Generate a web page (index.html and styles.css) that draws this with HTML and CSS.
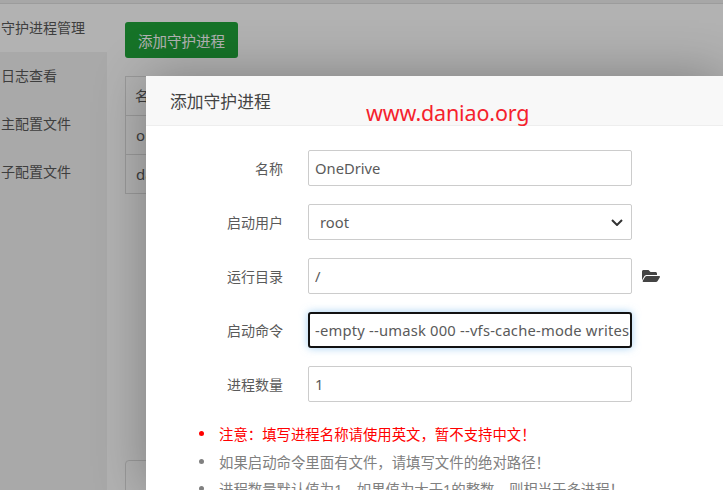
FILE: index.html
```html
<!DOCTYPE html>
<html lang="zh">
<head>
<meta charset="utf-8">
<title>添加守护进程</title>
<link rel="stylesheet" href="styles.css">
</head>
<body>
<div class="page">
  <div class="topbar"></div>
  <div class="main">
    <nav class="side">
      <div class="nav-item active">守护进程管理</div>
      <div class="nav-item">日志查看</div>
      <div class="nav-item">主配置文件</div>
      <div class="nav-item">子配置文件</div>
    </nav>
    <section class="content">
      <button class="add-btn" type="button">添加守护进程</button>
      <div class="table">
        <div class="tr">名称</div>
        <div class="tr">onedrive</div>
        <div class="tr">daniao</div>
      </div>
      <div class="tail-box"></div>
    </section>
  </div>
</div>
<div class="shade"></div>
<div class="modal">
  <header class="modal-head">添加守护进程</header>
  <form class="modal-body">
    <div class="row"><label class="lbl">名称</label><input class="field" value="OneDrive"></div>
    <div class="row"><label class="lbl">启动用户</label><select class="field pick"><option>root</option></select>
    </div>
    <div class="row"><label class="lbl">运行目录</label><input class="field" value="/">
      <svg class="folder" viewBox="0 0 576 512" aria-hidden="true"><path d="M572.694 292.093L500.27 416.248A63.997 63.997 0 0 1 444.989 448H45.025c-18.523 0-30.064-20.093-20.731-36.093l72.424-124.155A64 64 0 0 1 152 256h399.964c18.523 0 30.064 20.093 20.73 36.093zM152 224h328v-48c0-26.51-21.49-48-48-48H272l-64-64H48C21.49 64 0 85.49 0 112v278.046l69.077-118.418C86.214 242.25 117.989 224 152 224z"/></svg>
    </div>
    <div class="row"><label class="lbl">启动命令</label><input class="field focus" value="-empty --umask 000 --vfs-cache-mode writes"></div>
    <div class="row"><label class="lbl">进程数量</label><input class="field" value="1"></div>
    <ul class="notes">
      <li class="warn">注意：填写进程名称请使用英文，暂不支持中文！</li>
      <li>如果启动命令里面有文件，请填写文件的绝对路径！</li>
      <li>进程数量默认值为1，如果值为大于1的整数，则相当于多进程！</li>
    </ul>
  </form>
</div>
<div class="stamp">www.daniao.org</div>
</body>
</html>
```

FILE: styles.css
```css
* { box-sizing: border-box; }
html, body { margin: 0; height: 100%; overflow: hidden; }
body {
  background: #fff;
  color: #5a5a5a;
  font: 14px "Noto Sans", "Noto Sans CJK SC", sans-serif;
}
.page { height: 490px; display: flex; flex-direction: column; overflow: hidden; }
.topbar { height: 4px; background: #f0f0f0; border-bottom: 1px solid #e0e0e0; }
.main { flex: 1; display: flex; min-height: 0; }
.side { width: 107px; flex: none; background: #f2f2f2; overflow: hidden; }
.nav-item {
  height: 48px;
  padding: 0 0 2px 1px;
  display: flex;
  align-items: center;
  white-space: nowrap;
}
.nav-item.active { background: #fff; }
.content { flex: 1; padding: 18px 18px 0; min-width: 0; }
.add-btn {
  display: block;
  width: 113px;
  height: 36px;
  padding: 0;
  background: #20a53a;
  border: 0;
  border-radius: 3px;
  color: #fff;
  font: inherit;
  font-size: 14.5px;
}
.table { margin-top: 18px; border: 1px solid #ddd; font-size: 15px; }
.tr { height: 39px; padding: 0 10px; line-height: 38px; border-top: 1px solid #ddd; }
.tr:first-child { height: 38px; border-top: 0; font-size: 14px; padding-left: 9px; }
.tail-box { margin-top: 266px; height: 60px; border: 1px solid #ddd; border-radius: 4px; }
.shade { position: absolute; inset: 0; background: rgba(0, 0, 0, .3); }
.modal {
  position: absolute;
  left: 146px;
  top: 76px;
  right: 0;
  bottom: 0;
  overflow: hidden;
  background: #fff;
  box-shadow: 1px 1px 50px rgba(0, 0, 0, .3);
}
.modal-head {
  height: 50px;
  padding: 1px 0 0 24px;
  line-height: 50px;
  background: #f8f8f8;
  border-bottom: 1px solid #eee;
  color: #444;
  font-size: 16.8px;
}
.modal-body { padding-top: 24px; }
.row { display: flex; align-items: center; height: 36px; margin-bottom: 18px; }
.lbl { width: 137px; text-align: right; margin-right: 25px; }
.field {
  width: 324px;
  height: 36px;
  padding: 0 6px;
  background: #fff;
  border: 1px solid #ccc;
  border-radius: 2px;
  color: #5a5a5a;
  font: inherit;
  font-size: 14.75px;
  outline: 0;
}
.pick {
  padding: 0 0 0 11px;
  appearance: none;
  background: #fff url("data:image/svg+xml,%3Csvg xmlns='http://www.w3.org/2000/svg' width='12' height='7'%3E%3Cpath d='M1 1l5 5 5-5' fill='none' stroke='%23333' stroke-width='2'/%3E%3C/svg%3E") no-repeat right 8px center;
}
.focus {
  border: 2px solid #111;
  border-radius: 3px;
  padding: 0 0 0 5px;
  letter-spacing: .2px;
  box-shadow: 0 0 8px rgba(102, 175, 233, .6);
}
.folder { width: 18px; height: 16px; margin-left: 10px; fill: #444; }
.notes { margin: 13px 0 0; padding: 0 0 0 53px; list-style: none; color: #808080; font-size: 14.4px; }
.notes li { display: flex; align-items: center; gap: 15px; height: 27.5px; white-space: nowrap; }
.notes li::before {
  content: "";
  flex: none;
  width: 5px;
  height: 5px;
  border-radius: 50%;
  background: currentColor;
}
.notes .warn { color: #f00; }
.stamp {
  position: absolute;
  left: 366px;
  top: 96px;
  color: #f5222d;
  font-size: 21.5px;
  letter-spacing: -.15px;
  line-height: 33px;
}
```
